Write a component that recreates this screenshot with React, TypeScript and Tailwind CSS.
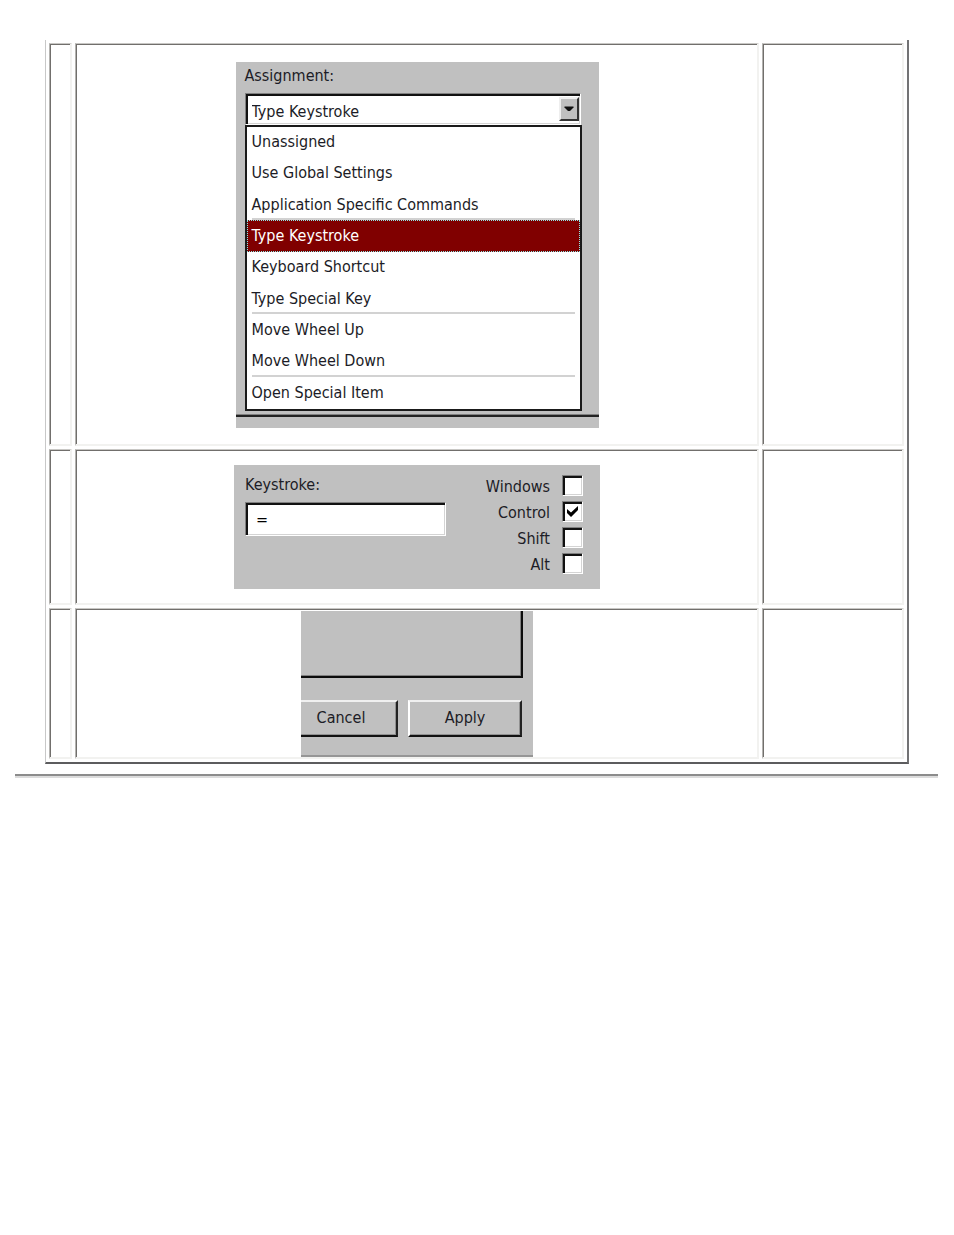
import { ReactNode } from "react";

interface AssignmentOption {
  label: string;
  divider?: boolean;
}

interface Modifier {
  id: string;
  label: string;
  checked: boolean;
}

const assignmentOptions: AssignmentOption[] = [
  { label: "Unassigned" },
  { label: "Use Global Settings" },
  { label: "Application Specific Commands", divider: true },
  { label: "Type Keystroke" },
  { label: "Keyboard Shortcut" },
  { label: "Type Special Key", divider: true },
  { label: "Move Wheel Up" },
  { label: "Move Wheel Down", divider: true },
  { label: "Open Special Item" },
];

const modifiers: Modifier[] = [
  { id: "windows", label: "Windows", checked: false },
  { id: "control", label: "Control", checked: true },
  { id: "shift", label: "Shift", checked: false },
  { id: "alt", label: "Alt", checked: false },
];

const sunken =
  "border border-t-[#808080] border-l-[#808080] border-r-white border-b-white bg-white shadow-[inset_2px_2px_0_#111,inset_-1px_-1px_0_#d4d4d4]";

const raised =
  "border-2 border-t-[#f0f0f0] border-l-white border-r-[#222] border-b-[#111] bg-[#c0c0c0] shadow-[inset_-1px_-1px_0_#909090]";

const Cell = ({ children }: { children?: ReactNode }) => (
  <td className="p-0 pt-px pl-px align-middle border-t border-l border-r-2 border-b-2 border-t-[#c8c7c4] border-l-[#b4b3b0] border-r-[#f2f2f0] border-b-[#f2f2f0] shadow-[inset_1px_1px_0_#716f6c]">
    {children}
  </td>
);

const AssignmentPanel = () => (
  <div className="mx-auto flex h-[366px] w-[363px] flex-col bg-[#c0c0c0]">
    <div className="px-[9px] pt-1">
      <label htmlFor="assignment" className="block h-[27px] leading-5">
        Assignment:
      </label>
      <div className={`flex h-8 w-[336px] p-[3px] pr-px ${sunken}`}>
        <select
          id="assignment"
          defaultValue="Type Keystroke"
          className="min-w-0 flex-1 appearance-none bg-transparent pt-[3px] pl-[3px] outline-none"
        >
          {assignmentOptions.map((option) => (
            <option key={option.label}>{option.label}</option>
          ))}
        </select>
        <span
          aria-hidden="true"
          className="flex w-5 items-center justify-center border-2 border-t-[#eee] border-l-[#eee] border-r-[#333] border-b-[#333] bg-[#c0c0c0]"
        >
          <svg width="10" height="6" viewBox="0 0 10 6">
            <path d="M0.5 0.5h9v1L6 5H4L0.5 1.5z" fill="#111" />
          </svg>
        </span>
      </div>
      <ul
        role="listbox"
        aria-label="Assignment"
        className="flex h-[286px] w-[337px] flex-col border-2 border-[#1a1a1a] bg-white"
      >
        {assignmentOptions.map((option) => {
          const selected = option.label === "Type Keystroke";
          return (
            <li
              key={option.label}
              role="option"
              aria-selected={selected}
              className={`flex flex-1 px-[5px] ${
                selected
                  ? "bg-[#800000] text-white outline-1 -outline-offset-1 outline-dotted outline-[#8fe8e8]"
                  : ""
              }`}
            >
              <span
                className={`flex flex-1 items-center border-b-2 pt-[2px] ${
                  option.divider ? "border-[#d2d2d2]" : "border-transparent"
                }`}
              >
                {option.label}
              </span>
            </li>
          );
        })}
      </ul>
    </div>
    <div className="mt-[3px] h-[3px] border-t border-b-2 border-t-[#808080] border-b-[#222]" />
  </div>
);

const KeystrokePanel = () => (
  <div className="mx-auto flex h-[124px] w-[366px] justify-between bg-[#c0c0c0] pt-[10px] pr-[17px] pl-[11px]">
    <div>
      <label htmlFor="keystroke" className="block h-[27px] leading-5">
        Keystroke:
      </label>
      <input
        id="keystroke"
        type="text"
        defaultValue="="
        className={`block h-[34px] w-[201px] px-[10px] text-black outline-none ${sunken}`}
      />
    </div>
    <div className="flex flex-col gap-[5px]">
      {modifiers.map((modifier) => (
        <div key={modifier.id} className="flex h-[21px] items-center justify-end gap-3">
          <label htmlFor={modifier.id} className="pt-[2px]">
            {modifier.label}
          </label>
          <span className="grid">
            <input
              id={modifier.id}
              type="checkbox"
              defaultChecked={modifier.checked}
              className={`peer col-start-1 row-start-1 size-[21px] appearance-none ${sunken}`}
            />
            <svg
              viewBox="0 0 21 21"
              className="pointer-events-none col-start-1 row-start-1 hidden size-[21px] peer-checked:block"
            >
              <path d="M5 8l4 3.5L16 5v4l-7 7-4-4z" fill="#000" />
            </svg>
          </span>
        </div>
      ))}
    </div>
  </div>
);

const ButtonsPanel = () => (
  <div className="mx-auto h-[146px] w-[232px] overflow-hidden border-b-2 border-[#969696] bg-[#c0c0c0]">
    <div className="mr-[10px] h-[67px] border-r-2 border-b-2 border-[#0c0c0c] shadow-[inset_-1px_-1px_0_#808080]" />
    <div className="mt-[22px] flex justify-end gap-[10px] pr-[11px]">
      <button type="button" className={`h-[37px] w-[114px] shrink-0 ${raised}`}>
        Cancel
      </button>
      <button type="button" className={`h-[37px] w-[114px] shrink-0 ${raised}`}>
        Apply
      </button>
    </div>
  </div>
);

export default function App() {
  return (
    <main className="min-h-screen bg-white pt-10 font-['DejaVu_Sans_Condensed','DejaVu_Sans',sans-serif] text-[16px] text-[#1c1c26]">
      <div className="px-[45px]">
        <table className="w-full table-fixed border-separate border-spacing-[3px] border-l border-r-2 border-b-2 border-l-[#c8c8c8] border-r-[#727274] border-b-[#5c5c5e]">
          <colgroup>
            <col className="w-[23px]" />
            <col />
            <col className="w-[142px]" />
          </colgroup>
          <tbody>
            <tr className="h-[403px]">
              <Cell />
              <Cell>
                <AssignmentPanel />
              </Cell>
              <Cell />
            </tr>
            <tr className="h-[156px]">
              <Cell />
              <Cell>
                <KeystrokePanel />
              </Cell>
              <Cell />
            </tr>
            <tr className="h-[151px]">
              <Cell />
              <Cell>
                <ButtonsPanel />
              </Cell>
              <Cell />
            </tr>
          </tbody>
        </table>
      </div>
      <hr className="mt-[10px] mr-4 ml-[15px] h-1 border-t-2 border-b-2 border-t-[#8c8c8c] border-b-[#dcdcdc]" />
    </main>
  );
}
